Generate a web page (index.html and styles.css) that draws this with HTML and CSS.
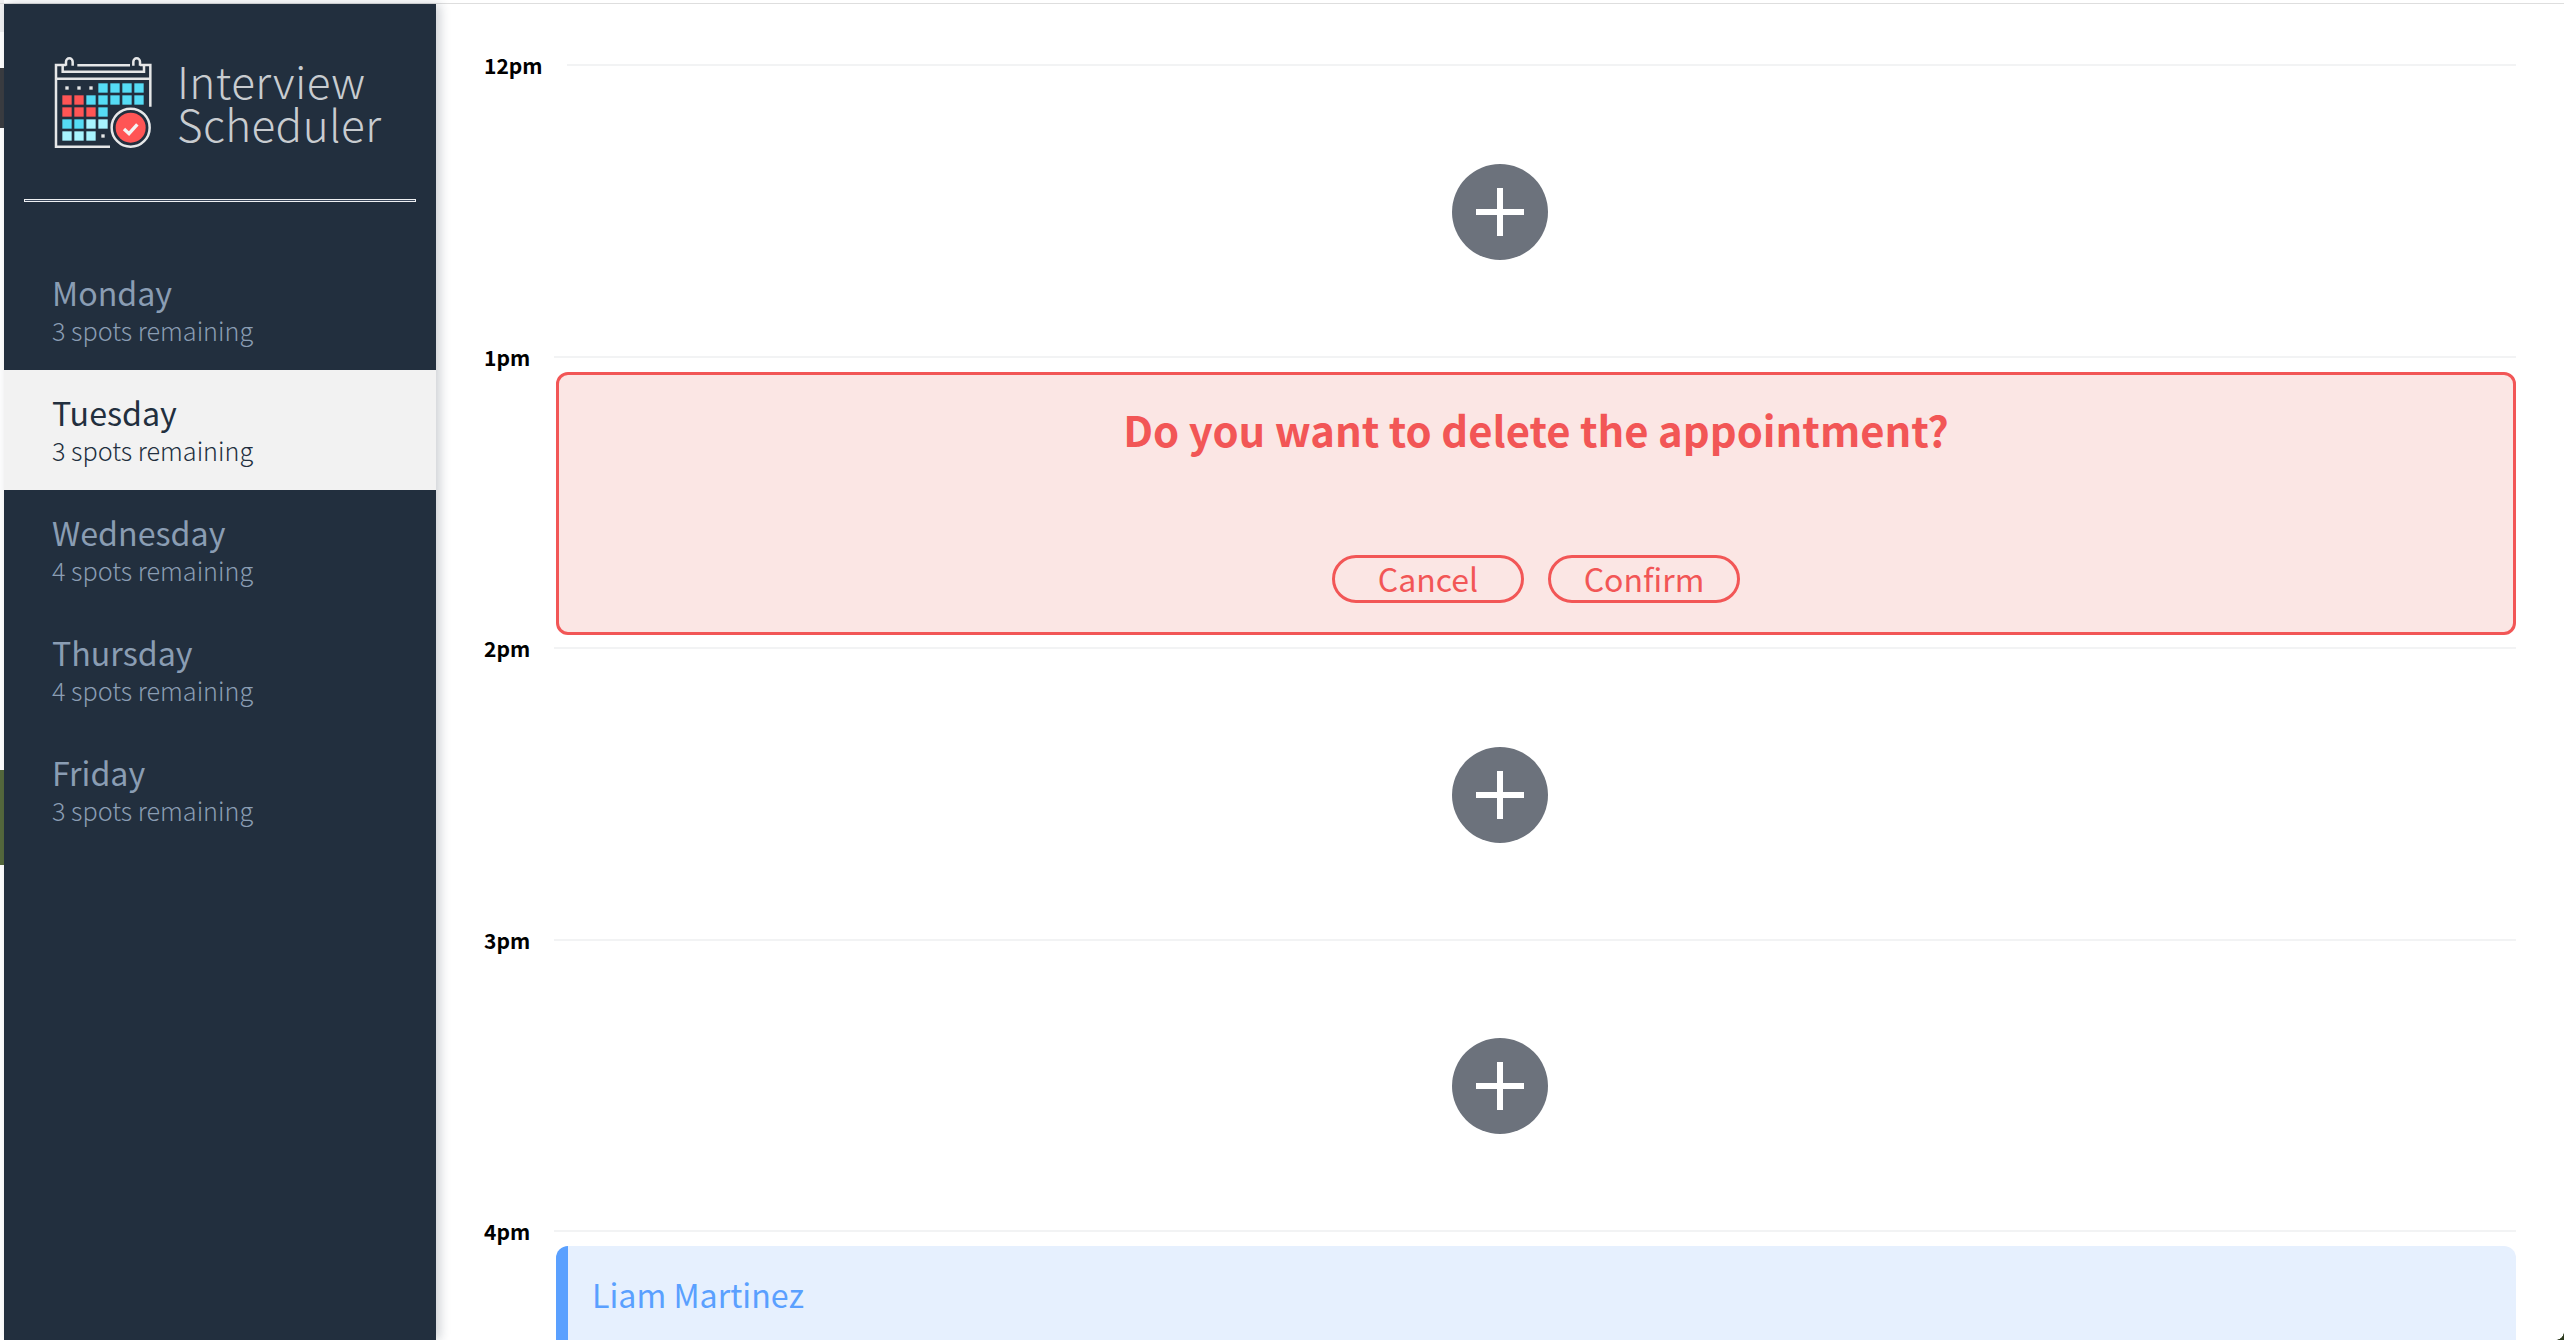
FILE: index.html
```html
<!DOCTYPE html>
<html lang="en">
<head>
<meta charset="utf-8">
<title>Interview Scheduler</title>
<link rel="stylesheet" href="styles.css">
</head>
<body>
<div class="desk desk-light"></div>
<div class="desk desk-dark"></div>
<div class="desk desk-green"></div>
<div class="desk-corner"></div>
<div class="window">
  <aside class="sidebar">
    <div class="brand">
      <svg class="brand-logo" viewBox="0 0 390 345" aria-hidden="true">
        <g fill="none" stroke="#e6e7e8" stroke-width="7.5">
          <path d="M210 305H48V60H78"/>
          <path d="M48 101H333"/>
          <path d="M300 60H331V185"/>
          <path d="M112 61H270"/>
          <path d="M68 60V80H312V60"/>
          <path d="M78 62V50a10 10 0 0 1 20 0V62"/>
          <path d="M280 62V50a10 10 0 0 1 20 0V62"/>
        </g>
        <g fill="#e6e7e8">
          <rect x="76" y="124" width="10" height="10"/>
          <rect x="112" y="124" width="10" height="10"/>
          <rect x="148" y="124" width="10" height="10"/>
          <rect x="184" y="268" width="10" height="10"/>
        </g>
        <g fill="#55dcf5">
          <rect x="175" y="115" width="28" height="28"/>
          <rect x="211" y="115" width="28" height="28"/>
          <rect x="247" y="115" width="28" height="28"/>
          <rect x="283" y="115" width="28" height="28"/>
          <rect x="139" y="151" width="28" height="28"/>
          <rect x="175" y="151" width="28" height="28"/>
          <rect x="211" y="151" width="28" height="28"/>
          <rect x="247" y="151" width="28" height="28"/>
          <rect x="283" y="151" width="28" height="28"/>
          <rect x="175" y="187" width="28" height="28"/>
          <rect x="67" y="223" width="28" height="28"/>
          <rect x="103" y="223" width="28" height="28"/>
        </g>
        <g fill="#ff5555">
          <rect x="67" y="151" width="28" height="28"/>
          <rect x="103" y="151" width="28" height="28"/>
          <rect x="67" y="187" width="28" height="28"/>
          <rect x="103" y="187" width="28" height="28"/>
          <rect x="139" y="187" width="28" height="28"/>
        </g>
        <g fill="#a8f4ff">
          <rect x="139" y="223" width="28" height="28"/>
          <rect x="175" y="223" width="28" height="28"/>
          <rect x="67" y="259" width="28" height="28"/>
          <rect x="103" y="259" width="28" height="28"/>
          <rect x="139" y="259" width="28" height="28"/>
        </g>
        <circle cx="272" cy="248" r="57" fill="#222f3e" stroke="#e6e7e8" stroke-width="7.5"/>
        <circle cx="272" cy="248" r="45" fill="#ff5555"/>
        <path d="M252 252L267 266L292 238" fill="none" stroke="#f4f4f4" stroke-width="10"/>
      </svg>
      <div class="brand-name">Interview<br>Scheduler</div>
    </div>
    <hr class="sidebar-rule">
    <nav class="days">
      <div class="day"><h2 class="day-name">Monday</h2><p class="day-spots">3 spots remaining</p></div>
      <div class="day day-selected"><h2 class="day-name">Tuesday</h2><p class="day-spots">3 spots remaining</p></div>
      <div class="day"><h2 class="day-name">Wednesday</h2><p class="day-spots">4 spots remaining</p></div>
      <div class="day"><h2 class="day-name">Thursday</h2><p class="day-spots">4 spots remaining</p></div>
      <div class="day"><h2 class="day-name">Friday</h2><p class="day-spots">3 spots remaining</p></div>
    </nav>
  </aside>
  <main class="schedule">
    <article class="slot">
      <header class="slot-head"><h4 class="slot-time">12pm</h4><hr class="slot-rule"></header>
      <div class="slot-add"><button class="add-btn" aria-label="Add"><svg viewBox="0 0 96 96" class="add-icon"><path d="M24 48H72M48 24V72" stroke="#fff" stroke-width="6" fill="none"/></svg></button></div>
    </article>
    <article class="slot">
      <header class="slot-head"><h4 class="slot-time">1pm</h4><hr class="slot-rule"></header>
      <section class="confirm">
        <h1 class="confirm-title">Do you want to delete the appointment?</h1>
        <div class="confirm-actions">
          <button class="pill">Cancel</button>
          <button class="pill">Confirm</button>
        </div>
      </section>
    </article>
    <article class="slot">
      <header class="slot-head"><h4 class="slot-time">2pm</h4><hr class="slot-rule"></header>
      <div class="slot-add"><button class="add-btn" aria-label="Add"><svg viewBox="0 0 96 96" class="add-icon"><path d="M24 48H72M48 24V72" stroke="#fff" stroke-width="6" fill="none"/></svg></button></div>
    </article>
    <article class="slot">
      <header class="slot-head"><h4 class="slot-time">3pm</h4><hr class="slot-rule"></header>
      <div class="slot-add"><button class="add-btn" aria-label="Add"><svg viewBox="0 0 96 96" class="add-icon"><path d="M24 48H72M48 24V72" stroke="#fff" stroke-width="6" fill="none"/></svg></button></div>
    </article>
    <article class="slot slot-last">
      <header class="slot-head"><h4 class="slot-time">4pm</h4><hr class="slot-rule"></header>
      <section class="booked"><h2 class="booked-name">Liam Martinez</h2></section>
    </article>
  </main>
</div>
</body>
</html>
```

FILE: styles.css
```css
* { box-sizing: border-box; }
html, body { margin: 0; height: 100%; overflow: hidden; background: #fff; }
body { font-family: "Noto Sans CJK SC", "Noto Sans", sans-serif; position: relative; }

.desk { position: absolute; left: 0; width: 4px; }
.desk-light { top: 0; height: 32px; background: #f0f0f1; }
.desk-dark { top: 68px; height: 60px; background: #3a3c40; }
.desk-green { top: 770px; height: 95px; background: #55693c; }
.desk-corner { position: absolute; right: 0; bottom: 0; width: 8px; height: 8px; background: radial-gradient(circle at 0 0, transparent 7.5px, #2c3a1e 8px); z-index: 2; }

.window { height: 100%; padding-left: 4px; display: flex; }
.window::before { content: ""; position: absolute; left: 0; right: 0; top: 3px; height: 1px; background: #dedede; }

.sidebar { width: 432px; flex: none; margin-top: 4px; background: #222f3e; box-shadow: 4px 0 10px rgba(34, 47, 62, .22); position: relative; z-index: 1; }
.brand { display: flex; padding: 41px 0 0 36px; height: 195px; }
.brand-logo { width: 130px; height: 115px; flex: none; }
.brand-name { margin: 14px 0 0 7px; font-size: 44px; line-height: 43px; font-weight: 300; color: #c8ccd0; letter-spacing: .4px; }
.sidebar-rule { margin: 0 20px; height: 3px; border: 1px solid #eef0f2; background: #39465a; }
.days { padding-top: 48px; }
.day { height: 120px; padding: 22px 0 0 48px; color: #8a9db3; }
.day-selected { background: #f2f2f2; color: #222f3e; }
.day-name { margin: 0; font-size: 32.2px; line-height: 40px; font-weight: 400; }
.day-spots { margin: 0; font-size: 25.2px; line-height: 36px; font-weight: 300; }

.schedule { flex: 1; height: 100%; overflow: hidden; padding: 53px 48px 0; min-width: 0; display: flex; flex-direction: column; }
.slot { height: 291.5px; flex: none; display: flex; flex-direction: column; }
.slot-last { flex: 1; height: auto; min-height: 0; }
.slot-head { display: flex; align-items: center; height: 24px; flex: none; }
.slot-time { margin: 0 24px 0 0; font-size: 21px; line-height: 24px; font-weight: 700; color: #000; }
.slot-rule { flex: 1; margin: 0; border: 0; height: 2px; background: #f2f3f4; }
.slot-add { flex: 1; display: flex; align-items: center; justify-content: center; margin-top: 2px; }
.add-btn { width: 96px; height: 96px; border: 0; padding: 0; border-radius: 50%; background: #6c727c; display: block; }
.add-icon { width: 96px; height: 96px; display: block; }

.confirm { flex: 1; margin: 3px 0 1px 72px; background: #fbe6e4; border: 3px solid #f25656; border-radius: 12px; color: #f25656; display: flex; flex-direction: column; align-items: center; justify-content: space-between; padding: 26px 0 29px; }
.confirm-title { margin: 0; font-size: 41.8px; line-height: 56px; font-weight: 700; }
.confirm-actions { display: flex; gap: 24px; }
.pill { width: 192px; height: 48px; border: 3px solid #f25656; border-radius: 24px; background: transparent; color: #f25656; font: 400 32px/40px "Noto Sans CJK SC", sans-serif; padding: 0 0 3px; }

.booked { flex: 1; min-height: 0; margin: 3px 0 0 72px; background: #e6f0fe; border-left: 12px solid #5aa0ff; border-radius: 12px 12px 0 0; padding: 26px 24px 0; }
.booked-name { margin: 0; font-size: 32.2px; line-height: 44px; font-weight: 400; color: #5aa0ff; }
```
